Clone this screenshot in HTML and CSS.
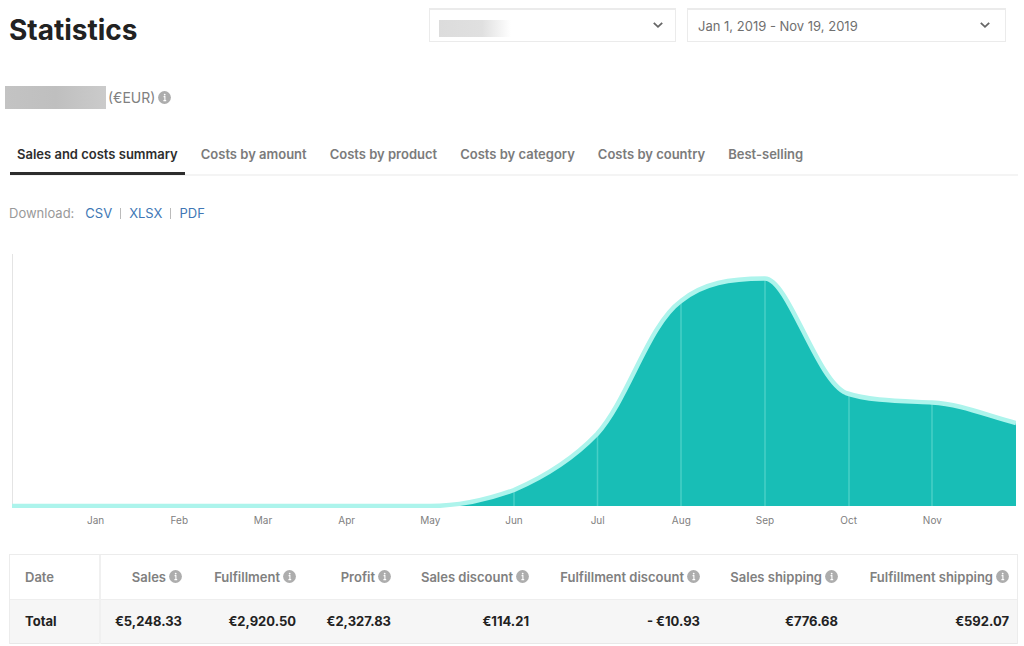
FILE: index.html
```html
<!DOCTYPE html>
<html lang="en">
<head>
<meta charset="utf-8">
<meta name="viewport" content="width=device-width, initial-scale=1">
<title>Statistics</title>
<link rel="stylesheet" href="styles.css">
</head>
<body>
<svg class="sprite" aria-hidden="true">
  <symbol id="info" viewBox="0 0 13 13">
    <circle cx="6.5" cy="6.5" r="6.4" fill="#adadad"/>
    <circle cx="6.700" cy="3.600" r="0.9" fill="#fff"/>
    <path d="M5.600 5.600h1.300v4M5.400 9.600h2.800" fill="none" stroke="#fff" stroke-width="1.1"/>
  </symbol>
  <symbol id="chevron" viewBox="0 0 12 8">
    <path d="M1.8 1.8 6 5.8l4.200-4" fill="none" stroke="#666" stroke-width="1.8"/>
  </symbol>
</svg>
<main class="page">
  <header class="header">
    <h1 class="title">Statistics</h1>
    <div class="filters">
      <div class="picker store">
        <select class="select redacted" aria-label="Store"><option value="1"></option></select>
        <svg class="chevron" aria-hidden="true"><use href="#chevron"/></svg>
      </div>
      <div class="picker period">
        <select class="select" aria-label="Period"><option>Jan 1, 2019 - Nov 19, 2019</option></select>
        <svg class="chevron" aria-hidden="true"><use href="#chevron"/></svg>
      </div>
    </div>
  </header>

  <div class="currency"><span class="mask"></span><span>(€EUR)</span><svg class="info"><use href="#info"/></svg></div>

  <nav class="tabs">
    <a class="tab active" href="#" aria-current="page">Sales and costs summary</a>
    <a class="tab" href="#">Costs by amount</a>
    <a class="tab" href="#">Costs by product</a>
    <a class="tab" href="#">Costs by category</a>
    <a class="tab" href="#">Costs by country</a>
    <a class="tab" href="#">Best-selling</a>
  </nav>

  <div class="download">
    <span class="label">Download:</span>
    <a href="#">CSV</a><span class="sep"></span><a href="#">XLSX</a><span class="sep"></span><a href="#">PDF</a>
  </div>

  <section class="chart" aria-label="Sales by month">
    <svg class="plot" viewBox="0 0 1004 254" aria-hidden="true">
      <path d="M.5 0V252" stroke="#e4e4e4"/>
      <path fill="#18beb6" d="M0 252H418C447 252 472 247 502 236C532 223 561 205 585 180C617 144 636 71 669 47C691 29 718 24.500 753 24.500C776 24.500 805 127 834 139C857 147 889 147 920 148.500C949 150 976 162 1004 169V252Z"/>
      <path stroke="#47cfc6" stroke-width="1.500" d="M502 236V252M585.500 180V252M669 47V252M753 25V252M837 141V252M920 149V252"/>
      <path fill="none" stroke="#adf4ec" stroke-width="4.500" d="M0 252H418C447 252 472 247 502 236C532 223 561 205 585 180C617 144 636 71 669 47C691 29 718 24.500 753 24.500C776 24.500 805 127 834 139C857 147 889 147 920 148.500C949 150 976 162 1004 169"/>
    </svg>
    <div class="months"><span>Jan</span><span>Feb</span><span>Mar</span><span>Apr</span><span>May</span><span>Jun</span><span>Jul</span><span>Aug</span><span>Sep</span><span>Oct</span><span>Nov</span></div>
  </section>

  <div class="summary">
    <table class="table">
      <colgroup><col class="w-date"><col class="w-sales"><col class="w-ful"><col class="w-profit"><col class="w-mid"><col class="w-wide"><col class="w-mid"><col class="w-wide"></colgroup>
      <thead><tr>
        <th scope="col">Date</th>
        <th scope="col">Sales<svg class="info"><use href="#info"/></svg></th>
        <th scope="col">Fulfillment<svg class="info"><use href="#info"/></svg></th>
        <th scope="col">Profit<svg class="info"><use href="#info"/></svg></th>
        <th scope="col">Sales discount<svg class="info"><use href="#info"/></svg></th>
        <th scope="col">Fulfillment discount<svg class="info"><use href="#info"/></svg></th>
        <th scope="col">Sales shipping<svg class="info"><use href="#info"/></svg></th>
        <th scope="col">Fulfillment shipping<svg class="info"><use href="#info"/></svg></th>
      </tr></thead>
      <tbody><tr>
        <th scope="row">Total</th><td>€5,248.33</td><td>€2,920.50</td><td>€2,327.83</td><td>€114.21</td><td>- €10.93</td><td>€776.68</td><td>€592.07</td>
      </tr></tbody>
    </table>
  </div>
</main>
</body>
</html>
```
FILE: styles.css
```css
* { box-sizing: border-box; }
body {
  margin: 0;
  background: #fff;
  color: #808080;
  font: 13px/20px Inter, "Liberation Sans", sans-serif;
}
.sprite { position: absolute; width: 0; height: 0; }
.page { padding: 8px 6px 0 9px; }

.header {
  display: flex;
  justify-content: space-between;
  padding-right: 12px;
}
.title {
  margin: 0;
  color: #222;
  font-size: 28px;
  font-weight: 700;
  line-height: 44px;
}
.filters { display: flex; gap: 11px; }
.picker { position: relative; height: 34px; }
.store { width: 247px; }
.period { width: 319px; }
.select {
  appearance: none;
  width: 100%;
  height: 100%;
  padding: 0 32px 0 10px;
  border: 1px solid #ebebeb;
  border-top-width: 2px;
  border-radius: 0;
  background: #fff;
  color: #707070;
  font: inherit;
}
.redacted {
  background: linear-gradient(90deg, #dcdcdc 0, #e0e0e0 60%, #fff) 9px 10px / 72px 17px no-repeat #fff;
}
.chevron {
  position: absolute;
  top: 13px;
  right: 12px;
  width: 12px;
  height: 8px;
  pointer-events: none;
}
.period .chevron { right: 15px; }

.currency {
  display: flex;
  align-items: center;
  margin: 34px 0 0 -4px;
  font-size: 14px;
}
.mask {
  width: 101px;
  height: 23px;
  margin-right: 2px;
  background: linear-gradient(90deg, #c3c3c3, #bfbfbf 50%, #cbcbcb);
}
.info { width: 13px; height: 13px; margin-left: 3px; }

.tabs {
  display: flex;
  gap: 9px;
  margin: 31px 0 0 1px;
  border-bottom: 2px solid #f4f4f4;
}
.tab {
  margin-bottom: -1px;
  padding: 4px 7px 8px;
  border-bottom: 3px solid transparent;
  color: #7b7b7b;
  font-weight: 600;
  text-decoration: none;
}
.active { border-color: #2d2d2d; color: #2d2d2d; }

.download { display: flex; align-items: center; margin-top: 27px; }
.download .label { margin-right: 11px; color: #999; }
.download a { color: #4077b5; text-decoration: none; }
.sep { width: 1px; height: 11px; margin: 0 8px; background: #bbb; }

.chart { margin: 31px 2px 0 3px; }
.plot { display: block; width: 100%; height: auto; }
.months {
  display: grid;
  grid-template-columns: repeat(11, 1fr);
  padding: 4px calc(100% / 24) 0;
  font-size: 10px;
  line-height: 16px;
  text-align: center;
}

.summary { margin-top: 26px; border: 1px solid #ececec; border-bottom: 0; }
.table { width: 100%; border-collapse: collapse; table-layout: fixed; }
.w-date { width: 90px; }
.w-sales { width: 90px; }
.w-ful { width: 114px; }
.w-profit { width: 95px; }
.w-mid { width: 138px; }
.w-wide { width: 171px; }
.table th, .table td {
  height: 44px;
  padding: 0 8px 0 0;
  font-weight: 600;
  text-align: right;
  white-space: nowrap;
}
.table th:first-child {
  padding-left: 15px;
  border-right: 2px solid #f0f0f0;
  text-align: left;
}
.table .info { vertical-align: -1px; }
.table tbody tr {
  border-top: 1px solid #eee;
  border-bottom: 1px solid #e8e8e8;
  background: #f6f6f6;
  color: #222;
}
.table tbody th, .table tbody td { font-weight: 700; }
```
